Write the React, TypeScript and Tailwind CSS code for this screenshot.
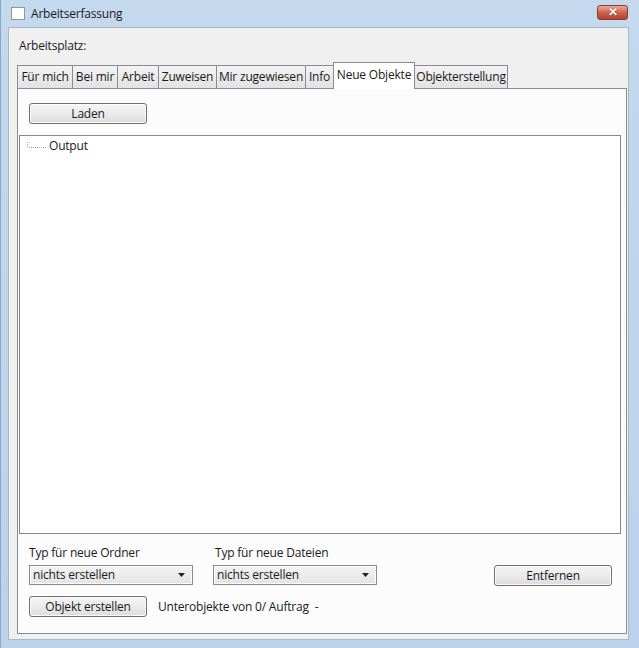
const font = "font-['Segoe_UI','Open_Sans',sans-serif] text-[12px] tracking-[-0.2px] text-[#1a1a1a]";

const tabs = [
  { label: "Für mich", w: "w-[55px]" },
  { label: "Bei mir", w: "w-[45px]" },
  { label: "Arbeit", w: "w-[41px]" },
  { label: "Zuweisen", w: "w-[58px]" },
  { label: "Mir zugewiesen", w: "w-[89px]" },
  { label: "Info", w: "w-[28px]" },
  { label: "Neue Objekte", w: "w-[82px]", active: true },
  { label: "Objekterstellung", w: "w-[93px]" },
];

function Button({ label, className = "" }: { label: string; className?: string }) {
  return (
    <div
      className={`flex h-[21px] w-[118px] items-center justify-center rounded-[3px] border border-[#707070] bg-gradient-to-b from-[#f4f4f4] via-[#ebebeb] to-[#dcdcdc] leading-none shadow-[inset_0_0_0_1px_#fbfbfb] ${className}`}
    >
      {label}
    </div>
  );
}

function Combo({ value }: { value: string }) {
  return (
    <div className="flex h-[20px] w-[164px] items-center justify-between border border-[#8a8a8a] bg-gradient-to-b from-[#f3f3f3] to-[#e4e4e4] pl-[3px] pr-[7px] shadow-[inset_0_0_0_1px_#fdfdfd]">
      <span className="leading-none">{value}</span>
      <svg width="7" height="4" viewBox="0 0 7 4">
        <path d="M0 0h7L3.5 4z" fill="#222" />
      </svg>
    </div>
  );
}

export default function App() {
  return (
    <div className={`flex h-[648px] w-[639px] flex-col overflow-hidden border-l border-[#8da6c2] bg-gradient-to-b from-[#c4d8ee] to-[#bcd2ea] ${font}`}>
      {/* title bar */}
      <div className="flex h-[27px] shrink-0 items-center pl-[10px] pr-[11px]">
        <div className="h-[13px] w-[14px] border border-[#8b96a3] bg-white" />
        <span className="ml-[6px] text-[#1b1b1b]">Arbeitserfassung</span>
        <div className="ml-auto -mt-[3px] flex h-[15px] w-[31px] items-center justify-center rounded-[3px] border border-[#8b3b30] bg-gradient-to-b from-[#e9a99b] via-[#d0614f] to-[#b8402e]">
          <span className="text-[12px] font-bold leading-none text-white [text-shadow:0_0_1px_#5a1b12]">✕</span>
        </div>
      </div>

      {/* client */}
      <div className="mb-[8px] ml-[7px] mr-[10px] flex flex-1 flex-col border border-[#a9b7c6] bg-[#f0f0f0]">
        <div className="pl-[10px] pt-[10px] leading-[16px]">Arbeitsplatz:</div>

        {/* tabs */}
        <div className="ml-[8px] mt-[8px] flex h-[26px] items-end">
          {tabs.map((t, i) =>
            t.active ? (
              <div
                key={t.label}
                className={`relative z-10 -mb-px flex h-[27px] ${t.w} items-start justify-center border-x border-t border-[#898c95] bg-white pt-[3px]`}
              >
                {t.label}
              </div>
            ) : (
              <div
                key={t.label}
                className={`flex h-[23px] ${t.w} items-center justify-center border-t border-[#898c95] bg-gradient-to-b from-[#f3f3f3] to-[#e2e2e2] ${
                  tabs[i - 1]?.active ? "" : "border-l"
                } ${i === tabs.length - 1 ? "border-r" : ""}`}
              >
                {t.label}
              </div>
            )
          )}
        </div>

        {/* tab page */}
        <div className="mb-[5px] ml-[8px] mr-[1px] flex flex-1 flex-col border border-[#898c95] bg-[#fcfcfc] pb-[16px]">
          <Button label="Laden" className="ml-[11px] mt-[14px]" />

          <div className="ml-px mr-[5px] mt-[11px] flex-1 border border-[#828790] bg-white">
            <div className="mt-[2px] flex items-center">
              <svg width="22" height="10" viewBox="0 0 22 10" className="ml-[7px]">
                <path d="M0.5 1V6M2 6.5H20" stroke="#a0a0a0" strokeDasharray="1 1" />
              </svg>
              <span className="leading-[16px]">Output</span>
            </div>
          </div>

          <div className="mt-[11px] flex items-end">
            <div className="ml-[11px] flex flex-col">
              <span className="leading-[16px]">Typ für neue Ordner</span>
              <div className="mt-[4px]">
                <Combo value="nichts erstellen" />
              </div>
            </div>
            <div className="ml-[20px] flex flex-col">
              <span className="pl-[2px] leading-[16px]">Typ für neue Dateien</span>
              <div className="mt-[4px]">
                <Combo value="nichts erstellen" />
              </div>
            </div>
            <Button label="Entfernen" className="ml-auto mr-[14px] -mb-px" />
          </div>

          <div className="mt-[11px] flex items-center">
            <Button label="Objekt erstellen" className="ml-[11px] w-[117px]" />
            <span className="ml-[11px] whitespace-pre">Unterobjekte von 0/ Auftrag  -</span>
          </div>
        </div>
      </div>
    </div>
  );
}
